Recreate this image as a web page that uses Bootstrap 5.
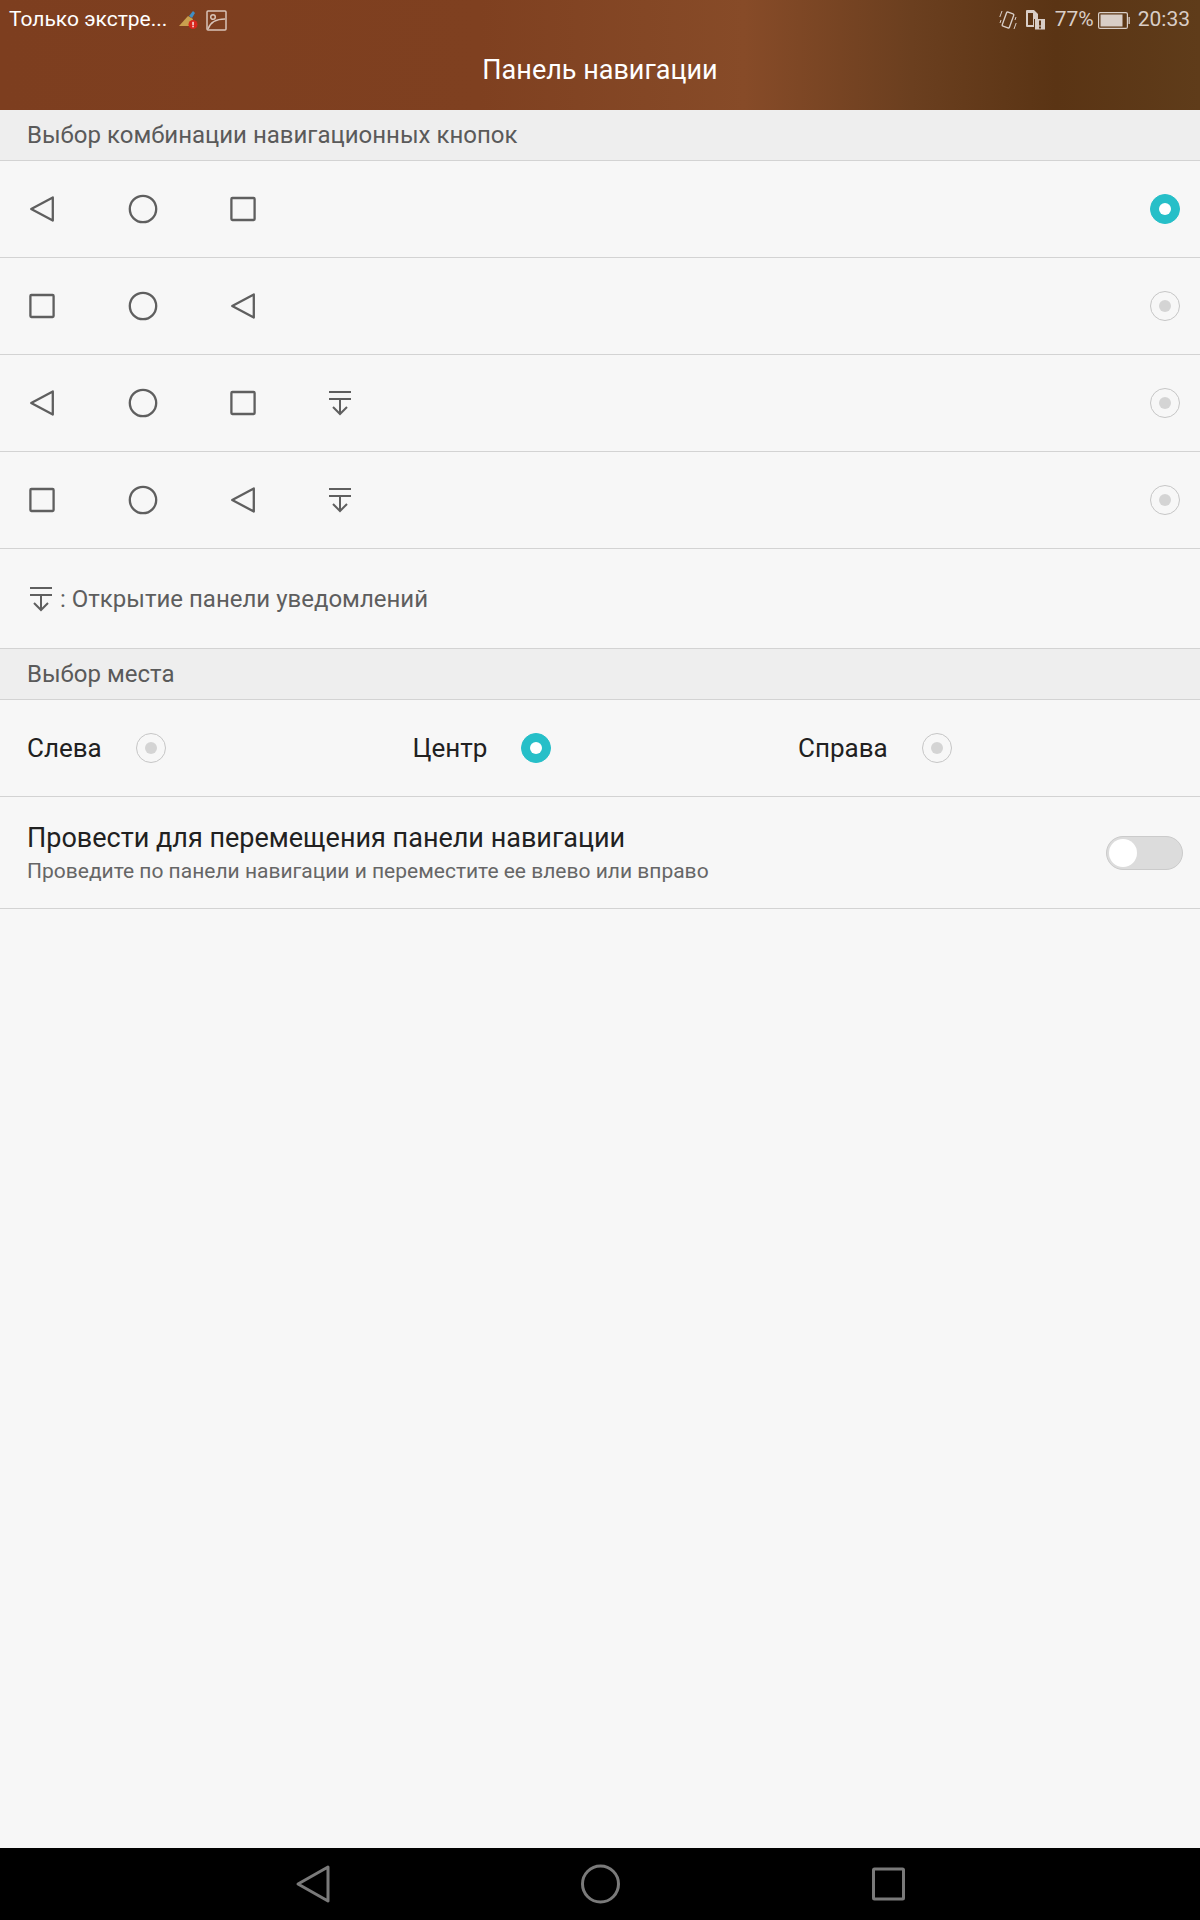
<!DOCTYPE html>
<html lang="ru">
<head>
  <meta charset="UTF-8" />
  <meta name="viewport" content="width=device-width, initial-scale=1" />
  <title>Панель навигации</title>
  <link href="https://cdn.jsdelivr.net/npm/bootstrap@5.3.3/dist/css/bootstrap.min.css" rel="stylesheet">
  <style>
    :root {
      --bs-border-color: #d3d3d3;
      --teal: #26bfc8;
    }

    body {
      background-color: #f7f7f7;
      font-family: Roboto, "Noto Sans", sans-serif;
      color: #212121;
    }

    .top-bar {
      height: 110px;
      background: linear-gradient(90deg, #7d3e1f 0%, #7f4020 40%, #874b28 62%, #6b3f1f 76%, #5a3414 88%, #5f3c1a 100%);
    }

    .status-line {
      height: 40px;
      padding: 0 10px 0 9px;
      font-size: 21px;
      color: #d9cec7;
    }

    .status-title { color: #fff; width: 169px; }
    .status-pct { margin-left: 10px; }
    .status-time { margin-left: 8px; }

    .page-title {
      font-size: 27px;
      color: #fff;
      line-height: 70px;
      height: 70px;
      margin-top: -5px;
    }

    .group-head {
      height: 51px;
      padding-left: 27px;
      background-color: #eeeeee;
      font-size: 24px;
      color: #5a5a5a;
    }

    .combo-row {
      height: 97px;
      padding: 0 20px 0 27px;
    }

    .combo-icons { gap: 70.5px; }
    .combo-icons svg { display: block; }
    .notif-shift { margin-left: -3.5px; }

    .info-row {
      height: 100px;
      padding-left: 26px;
      font-size: 24px;
      color: #5e5e5e;
      gap: 4px;
    }

    .place-row {
      height: 97px;
      padding-left: 27px;
    }

    .place-item {
      width: 385.5px;
      font-size: 26px;
      gap: 34px;
    }

    .switch-row {
      height: 112px;
      padding: 0 17px 0 27px;
    }

    .switch-title { font-size: 27px; line-height: 36px; }
    .switch-sub { font-size: 21px; line-height: 30px; color: #666; }

    .pick {
      width: 30px;
      height: 30px;
      border-radius: 50%;
      border: 1px solid #c6c6c6;
      flex-shrink: 0;
    }

    .pick::after {
      content: "";
      width: 12px;
      height: 12px;
      border-radius: 50%;
      background-color: #d4d4d4;
    }

    .pick.is-on {
      background-color: var(--teal);
      border-color: var(--teal);
    }

    .pick.is-on::after { background-color: #fff; }

    .toggle-off {
      width: 77px;
      height: 34px;
      padding: 2px;
      border-radius: 17px;
      background-color: #dcdcdc;
      border: 1px solid #cbcbcb;
    }

    .toggle-knob {
      width: 28px;
      height: 28px;
      border-radius: 50%;
      background-color: #fff;
    }

    .sys-nav {
      height: 72px;
      background-color: #000;
    }

    .sys-slot { position: absolute; top: 13px; }
    .line-ico { fill: none; stroke: #5f5f5f; stroke-width: 2.3; stroke-linejoin: round; }
  </style>
</head>
<body>
  <svg width="0" height="0" class="d-block position-absolute">
    <symbol id="ico-back" viewBox="0 0 30 30"><path d="M25.8 3.5 4.2 15l21.6 11.5z" /></symbol>
    <symbol id="ico-home" viewBox="0 0 30 30"><circle cx="15" cy="15" r="13.2" /></symbol>
    <symbol id="ico-recent" viewBox="0 0 30 30"><rect x="3.4" y="4" width="23.2" height="22" rx="1" /></symbol>
    <symbol id="ico-notif" viewBox="0 0 30 30"><path d="M4 4h22M4 11h22M15 11.5v14.5M8 19l7 7 7-7" stroke-linejoin="miter" stroke-width="2" /></symbol>
  </svg>

  <div class="d-flex flex-column vh-100">
    <header class="top-bar flex-shrink-0">
      <div class="status-line d-flex align-items-center">
        <span class="status-title text-nowrap">Только экстре...</span>
        <svg width="20" height="20" viewBox="0 0 20 20">
          <path d="M15 1 11 6l3 2 3-5z" fill="#3f8fc4" />
          <path d="M10 6 1 16h12l2-7z" fill="#c9a04e" />
          <circle cx="15" cy="14.5" r="4.5" fill="#d8261c" />
          <rect x="14.4" y="11.8" width="1.3" height="3.6" fill="#fff" />
          <rect x="14.4" y="16" width="1.3" height="1.3" fill="#fff" />
        </svg>
        <svg class="ms-2" width="21" height="21" viewBox="0 0 21 21" fill="none" stroke="#d9c4b8" stroke-width="1.5">
          <rect x="1" y="1" width="19" height="19" rx="1" />
          <circle cx="7" cy="7" r="2.3" />
          <path d="M2 19c2-6 8-10 17-10" />
        </svg>
        <span class="flex-grow-1"></span>
        <svg width="18" height="20" viewBox="0 0 18 20" fill="none" stroke="#d9cec7" stroke-width="1.4">
          <rect x="5.2" y="2.5" width="7.6" height="15" rx="1.2" transform="rotate(20 9 10)" />
          <path d="M3 1 .8 7M1 13l1-3M17.2 13 15 19M17 7l-1 3" stroke-width="1" />
        </svg>
        <svg class="ms-2" width="20" height="20" viewBox="0 0 20 20">
          <path d="M2 0h7l4 4v5H9v8H2a1 1 0 0 1-1-1V1a1 1 0 0 1 1-1z" fill="#d9cec7" />
          <rect x="3" y="3" width="5" height="12" fill="#5c3515" />
          <rect x="10" y="9" width="10" height="10.5" fill="#d9cec7" />
          <rect x="14" y="10.5" width="2" height="5" fill="#5c3515" />
          <rect x="14" y="16.5" width="2" height="2" fill="#5c3515" />
        </svg>
        <span class="status-pct">77%</span>
        <svg class="ms-1" width="32" height="17" viewBox="0 0 32 17" fill="none">
          <rect x=".6" y=".6" width="28.8" height="15.8" rx="1.5" stroke="#d9cec7" stroke-width="1.2" />
          <rect x="2.5" y="2.5" width="22" height="12" fill="#d9cec7" />
          <rect x="30.5" y="5" width="1.3" height="7" fill="#d9cec7" />
        </svg>
        <span class="status-time">20:33</span>
      </div>
      <div class="page-title text-center">Панель навигации</div>
    </header>

    <div class="group-head d-flex align-items-center border-bottom">Выбор комбинации навигационных кнопок</div>

    <div class="combo-row d-flex align-items-center justify-content-between border-bottom">
      <div class="combo-icons d-flex">
        <svg class="line-ico" width="30" height="30"><use href="#ico-back" /></svg>
        <svg class="line-ico" width="30" height="30"><use href="#ico-home" /></svg>
        <svg class="line-ico" width="30" height="30"><use href="#ico-recent" /></svg>
      </div>
      <span class="pick is-on d-flex align-items-center justify-content-center"></span>
    </div>

    <div class="combo-row d-flex align-items-center justify-content-between border-bottom">
      <div class="combo-icons d-flex">
        <svg class="line-ico" width="30" height="30"><use href="#ico-recent" /></svg>
        <svg class="line-ico" width="30" height="30"><use href="#ico-home" /></svg>
        <svg class="line-ico" width="30" height="30"><use href="#ico-back" /></svg>
      </div>
      <span class="pick d-flex align-items-center justify-content-center"></span>
    </div>

    <div class="combo-row d-flex align-items-center justify-content-between border-bottom">
      <div class="combo-icons d-flex">
        <svg class="line-ico" width="30" height="30"><use href="#ico-back" /></svg>
        <svg class="line-ico" width="30" height="30"><use href="#ico-home" /></svg>
        <svg class="line-ico" width="30" height="30"><use href="#ico-recent" /></svg>
        <svg class="line-ico notif-shift" width="30" height="30"><use href="#ico-notif" /></svg>
      </div>
      <span class="pick d-flex align-items-center justify-content-center"></span>
    </div>

    <div class="combo-row d-flex align-items-center justify-content-between border-bottom">
      <div class="combo-icons d-flex">
        <svg class="line-ico" width="30" height="30"><use href="#ico-recent" /></svg>
        <svg class="line-ico" width="30" height="30"><use href="#ico-home" /></svg>
        <svg class="line-ico" width="30" height="30"><use href="#ico-back" /></svg>
        <svg class="line-ico notif-shift" width="30" height="30"><use href="#ico-notif" /></svg>
      </div>
      <span class="pick d-flex align-items-center justify-content-center"></span>
    </div>

    <div class="info-row d-flex align-items-center border-bottom">
      <svg class="line-ico" width="30" height="30"><use href="#ico-notif" /></svg>
      <span>: Открытие панели уведомлений</span>
    </div>

    <div class="group-head d-flex align-items-center border-bottom">Выбор места</div>

    <div class="place-row d-flex align-items-center border-bottom">
      <div class="place-item d-flex align-items-center">
        <span>Слева</span>
        <span class="pick d-flex align-items-center justify-content-center"></span>
      </div>
      <div class="place-item d-flex align-items-center">
        <span>Центр</span>
        <span class="pick is-on d-flex align-items-center justify-content-center"></span>
      </div>
      <div class="place-item d-flex align-items-center">
        <span>Справа</span>
        <span class="pick d-flex align-items-center justify-content-center"></span>
      </div>
    </div>

    <div class="switch-row d-flex align-items-center justify-content-between border-bottom">
      <div>
        <div class="switch-title">Провести для перемещения панели навигации</div>
        <div class="switch-sub">Проведите по панели навигации и переместите ее влево или вправо</div>
      </div>
      <div class="toggle-off"><div class="toggle-knob"></div></div>
    </div>

    <div class="flex-grow-1"></div>

    <nav class="sys-nav position-relative flex-shrink-0">
      <svg class="sys-slot" style="left:293px" width="39" height="46" viewBox="0 0 39 46" fill="none" stroke="#7a7a7a" stroke-width="3" stroke-linejoin="round"><path d="M35 6 5 23l30 17z" /></svg>
      <svg class="sys-slot" style="left:581px" width="39" height="46" viewBox="0 0 39 46" fill="none" stroke="#7a7a7a" stroke-width="3"><circle cx="19.5" cy="23" r="18" /></svg>
      <svg class="sys-slot" style="left:869px" width="39" height="46" viewBox="0 0 39 46" fill="none" stroke="#7a7a7a" stroke-width="3" stroke-linejoin="round"><rect x="4.5" y="8" width="30" height="30" rx="1" /></svg>
    </nav>
  </div>

  <script src="https://cdn.jsdelivr.net/npm/bootstrap@5.3.3/dist/js/bootstrap.bundle.min.js"></script>
</body>
</html>
